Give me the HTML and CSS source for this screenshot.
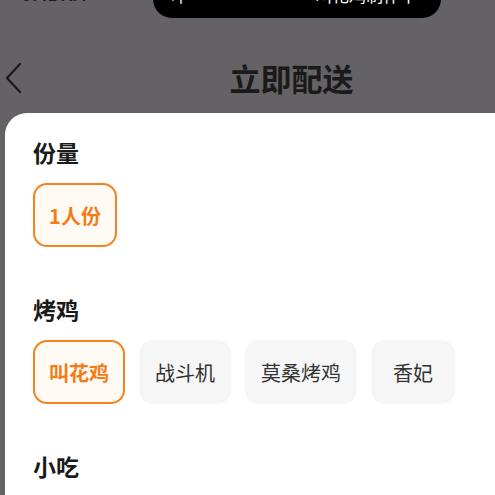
FILE: index.html
```html
<!DOCTYPE html>
<html lang="zh-CN">
<head>
    <meta charset="UTF-8">
    <meta name="viewport" content="width=device-width, initial-scale=1.0">
    <title>立即配送</title>
    <link rel="stylesheet" href="styles.css">
</head>
<body>
    <!-- 状态栏（顶部被裁掉） -->
    <div class="status-bar">
        <span class="time">9:41 AM</span>
        <div class="island">
            <span class="island-icon">卟</span>
            <span class="island-text">叫花鸡制作中</span>
        </div>
        <span class="signal">•••</span>
    </div>

    <div class="header">
        <svg class="back" width="18" height="32" viewBox="0 0 18 32">
            <path d="M16 2 L3 16 L16 30" fill="none" stroke="#1a1a1a" stroke-width="2.2" stroke-linecap="round" stroke-linejoin="round"/>
        </svg>
        <h1 class="title">立即配送</h1>
    </div>

    <div class="sheet">
        <div class="section">
            <h2>份量</h2>
            <div class="options">
                <div class="chip active">1人份</div>
            </div>
        </div>

        <div class="section">
            <h2>烤鸡</h2>
            <div class="options">
                <div class="chip active">叫花鸡</div>
                <div class="chip">战斗机</div>
                <div class="chip">莫桑烤鸡</div>
                <div class="chip">香妃</div>
            </div>
        </div>

        <div class="section">
            <h2>小吃</h2>
        </div>
    </div>
</body>
</html>
```

FILE: styles.css
```css
body {
    margin: 0;
    background-color: #646264;
    font-family: 'Noto Sans CJK SC', 'Noto Sans', sans-serif;
    color: #1a1a1a;
    height: 495px;
    overflow: hidden;
}

.status-bar {
    height: 20px;
    position: relative;
    overflow: hidden;
}

.time {
    position: absolute;
    left: 22px;
    top: -19px;
    font-size: 17px;
    font-weight: 700;
    color: #1a1a1a;
}

.signal {
    position: absolute;
    right: 6px;
    top: -18px;
    font-size: 16px;
    color: #1a1a1a;
}

.island {
    position: absolute;
    left: 153px;
    top: -20px;
    width: 288px;
    height: 38px;
    background-color: #000;
    border-radius: 19px;
    color: #fff;
    font-size: 17px;
}

.island-icon {
    position: absolute;
    left: 18px;
    top: 5px;
    line-height: 20px;
}

.island-text {
    position: absolute;
    right: 24px;
    top: 5px;
    line-height: 20px;
}

.header {
    display: flex;
    align-items: center;
    height: 40px;
    padding: 38px 0 15px 4px;
}

.back {
    display: block;
}

.title {
    flex: 1;
    margin: 0;
    padding-left: 66px;
    text-align: center;
    font-size: 31px;
    font-weight: 700;
    line-height: 40px;
    color: #1a1a1a;
}

.sheet {
    margin-left: 5px;
    background-color: #fff;
    border-radius: 22px 0 0 0;
    padding: 24px 28px 0 28px;
    height: 400px;
}

.section {
    margin-bottom: 47px;
}

.section h2 {
    margin: 0 0 16px 0;
    font-size: 23px;
    font-weight: 700;
    line-height: 30px;
    color: #1a1a1a;
}

.options {
    display: flex;
    gap: 14px;
}

.chip {
    box-sizing: border-box;
    min-width: 84px;
    height: 64px;
    padding: 0 14px;
    display: flex;
    align-items: center;
    justify-content: center;
    background-color: #f6f6f6;
    border: 2px solid #f6f6f6;
    border-radius: 14px;
    font-size: 20px;
    color: #333;
}

.chip.active {
    background-color: #fffaf4;
    border-color: #f5821f;
    color: #f57c14;
    font-weight: 700;
}
```
